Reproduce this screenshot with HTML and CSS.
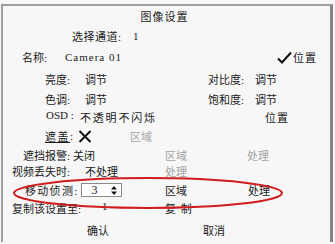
FILE: index.html
```html
<!DOCTYPE html>
<html lang="zh-CN">
<head>
<meta charset="utf-8">
<title>图像设置</title>
<link rel="stylesheet" href="styles.css">
</head>
<body>
<div class="panel">
  <div class="row title">图像设置</div>
  <div class="row channel"><span class="lbl l-channel">选择通道:</span><span>1</span></div>
  <div class="row name-row">
    <span class="lbl l-name">名称:</span>
    <span class="cam">Camera 01</span>
    <span class="spacer"></span>
    <svg class="check" width="15" height="13" viewBox="0 0 15 13"><path d="M1 7.5 L5 11.5 L14 1.5" fill="none" stroke="#111" stroke-width="2"/></svg>
    <span class="pos">位置</span>
  </div>
  <div class="row pair h22">
    <span class="c-left"><span class="lbl l-short">亮度:</span><span>调节</span></span>
    <span class="lbl l-long">对比度:</span><span>调节</span>
  </div>
  <div class="row pair h18">
    <span class="c-left"><span class="lbl l-short">色调:</span><span>调节</span></span>
    <span class="lbl l-long">饱和度:</span><span>调节</span>
  </div>
  <div class="row osd">
    <span class="c-osd"><span class="lbl l-osd">OSD :</span><span class="osd-val">不透明不闪烁</span></span>
    <span class="pos">位置</span>
  </div>
  <div class="row mask">
    <span class="ul">遮盖</span><span>:</span>
    <svg class="xmark" width="14" height="13" viewBox="0 0 14 13"><path d="M1.5 1 L12.5 12 M12.5 1 L1.5 12" stroke="#111" stroke-width="2"/></svg>
    <span class="muted mask-area">区域</span>
  </div>
  <div class="row alarm">
    <span class="c-alarm"><span class="lbl l-alarm">遮挡报警:</span><span>关闭</span></span>
    <span class="muted c-mid">区域</span><span class="muted">处理</span>
  </div>
  <div class="row lost">
    <span class="c-lost"><span class="lbl l-lost">视频丢失时:</span><span>不处理</span></span>
    <span class="muted">处理</span>
  </div>
  <div class="row motion">
    <span class="c-motion">
      <span class="motion-label">移动侦测:</span>
      <span class="spin"><span class="spin-val">3</span>
        <svg class="arrows" width="6" height="9" viewBox="0 0 6 9"><path d="M3 0 L6 3.5 L0 3.5 Z M0 5.5 L6 5.5 L3 9 Z" fill="#111"/></svg>
      </span>
    </span>
    <span class="c-mid2">区域</span><span>处理</span>
  </div>
  <div class="row copy">
    <span class="c-copy"><span class="lbl l-copy">复制该设置至:</span><span>1</span></span>
    <span class="copy-btn">复 制</span>
  </div>
  <div class="row buttons"><span class="c-ok">确认</span><span>取消</span></div>
</div>
<svg class="annot" width="335" height="244" viewBox="0 0 335 244"><ellipse cx="148" cy="193" rx="134" ry="15" fill="none" stroke="#d01c1c" stroke-width="2"/></svg>
</body>
</html>
```

FILE: styles.css
```css
html, body {
  margin: 0;
  padding: 0;
  background: #f7f7f7;
}
body {
  width: 335px;
  height: 244px;
  overflow: hidden;
  position: relative;
  font-family: "Liberation Serif", "Noto Sans CJK SC", serif;
  font-size: 11px;
  color: #1a1a1a;
}
.panel {
  margin: 4px 0 0 1px;
  width: 332px;
  height: 238px;
  box-sizing: border-box;
  border-top: 2px solid #a0a0a0;
  border-left: 2px solid #a0a0a0;
  border-right: 3px solid #838383;
  display: flex;
  flex-direction: column;
}
.row {
  display: flex;
  align-items: center;
  white-space: nowrap;
  height: 20px;
}
.lbl {
  display: inline-block;
  flex: none;
}
.title {
  justify-content: center;
  letter-spacing: 1px;
  padding-right: 4px;
}
.channel {
  padding-left: 69px;
  letter-spacing: 0.5px;
}
.l-channel { width: 61px; }
.name-row {
  height: 22px;
  padding-left: 19px;
  padding-right: 13px;
}
.l-name { width: 43px; }
.cam {
  letter-spacing: 1px;
}
.spacer {
  flex: 1;
}
.check {
  margin-right: 1px;
}
.pos {
  letter-spacing: 1px;
}
.pair {
  padding-left: 42px;
}
.h22 { height: 22px; }
.h18 { height: 18px; }
.c-left {
  width: 163px;
  display: flex;
}
.l-short { width: 40px; }
.l-long { width: 47px; }
.osd {
  height: 18px;
  padding-left: 43px;
}
.c-osd {
  width: 219px;
  display: flex;
}
.l-osd { width: 34px; }
.osd-val {
  letter-spacing: 1.8px;
}
.mask {
  padding-left: 42px;
}
.ul {
  text-decoration: underline;
  letter-spacing: 1.5px;
}
.xmark {
  margin-left: 5px;
}
.mask-area {
  margin-left: 38px;
}
.muted {
  color: #a3a3a3;
}
.alarm {
  height: 18px;
  padding-left: 20px;
}
.c-alarm {
  width: 142px;
  display: flex;
}
.l-alarm { width: 50px; }
.c-mid {
  width: 82px;
}
.lost {
  height: 14px;
  padding-left: 9px;
}
.c-lost {
  width: 153px;
  display: flex;
}
.l-lost { width: 73px; }
.motion {
  height: 24px;
  padding-left: 22px;
}
.c-motion {
  width: 140px;
  display: flex;
  align-items: center;
}
.motion-label {
  letter-spacing: 1.3px;
}
.spin {
  margin-left: 2px;
  width: 41px;
  height: 14px;
  box-sizing: border-box;
  border: 1px solid #8a8a8a;
  background: #fff;
  display: flex;
  align-items: center;
  padding-left: 10px;
  padding-right: 4px;
  font-size: 12px;
}
.spin-val {
  flex: 1;
}
.c-mid2 {
  width: 83px;
}
.copy {
  height: 12px;
  padding-left: 9px;
}
.c-copy {
  width: 153px;
  display: flex;
}
.l-copy { width: 90px; }
.copy-btn {
  letter-spacing: 1px;
}
.buttons {
  margin-top: 6px;
  padding-left: 84px;
}
.c-ok {
  width: 116px;
}
.annot {
  position: absolute;
  left: 0;
  top: 0;
  pointer-events: none;
}
```
